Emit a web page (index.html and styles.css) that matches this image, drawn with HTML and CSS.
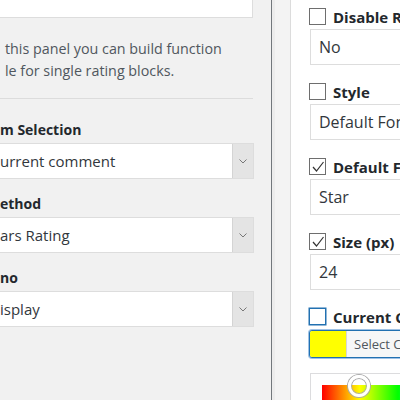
FILE: index.html
```html
<!DOCTYPE html>
<html>
<head>
<meta charset="utf-8">
<link rel="stylesheet" href="styles.css">
</head>
<body>
<div class="page">
  <div class="left">
    <div class="inner">
      <div class="top-input"></div>
      <p class="desc">this panel you can build function<br>le for single rating blocks.</p>
      <hr class="sep">
      <div class="field">
        <div class="label">m Selection</div>
        <div class="select"><span class="val">urrent comment</span><span class="arrow"><svg width="8" height="5" viewBox="0 0 8 5"><path d="M0.5 0.5 L4 4 L7.5 0.5" fill="none" stroke="#777" stroke-width="1"/></svg></span></div>
      </div>
      <div class="field">
        <div class="label">ethod</div>
        <div class="select"><span class="val">ars Rating</span><span class="arrow"><svg width="8" height="5" viewBox="0 0 8 5"><path d="M0.5 0.5 L4 4 L7.5 0.5" fill="none" stroke="#777" stroke-width="1"/></svg></span></div>
      </div>
      <div class="field">
        <div class="label">no</div>
        <div class="select"><span class="val">isplay</span><span class="arrow"><svg width="8" height="5" viewBox="0 0 8 5"><path d="M0.5 0.5 L4 4 L7.5 0.5" fill="none" stroke="#777" stroke-width="1"/></svg></span></div>
      </div>
    </div>
  </div>
  <div class="strip"></div>
  <div class="right">
    <div class="row">
      <div class="check-line"><span class="cb"></span><span class="rlabel">Disable Rating</span></div>
      <div class="input">No</div>
    </div>
    <div class="row">
      <div class="check-line"><span class="cb"></span><span class="rlabel">Style</span></div>
      <div class="input">Default Font Icons</div>
    </div>
    <div class="row">
      <div class="check-line"><span class="cb"><svg width="14" height="14" viewBox="0 0 14 14"><path d="M2 7 L5.5 11 L12.5 2" fill="none" stroke="#333" stroke-width="1.2"/></svg></span><span class="rlabel">Default Font</span></div>
      <div class="input">Star</div>
    </div>
    <div class="row">
      <div class="check-line"><span class="cb"><svg width="14" height="14" viewBox="0 0 14 14"><path d="M2 7 L5.5 11 L12.5 2" fill="none" stroke="#333" stroke-width="1.2"/></svg></span><span class="rlabel">Size (px)</span></div>
      <div class="input">24</div>
    </div>
    <div class="row">
      <div class="check-line"><span class="cb focus"></span><span class="rlabel">Current Color</span></div>
      <div class="color-btn"><span class="swatch"></span><span class="ctext">Select Color</span></div>
      <div class="picker">
        <div class="grad"></div>
        <span class="handle"></span>
      </div>
    </div>
  </div>
</div>
</body>
</html>
```
FILE: styles.css
```css
html, body {
  margin: 0;
  padding: 0;
}
body {
  width: 400px;
  height: 400px;
  overflow: hidden;
  font-family: "Open Sans", "Noto Sans", sans-serif;
}
.page {
  display: flex;
  width: 400px;
  height: 400px;
  overflow: hidden;
}
.left {
  width: 271px;
  flex: none;
  background: #f1f1f1;
  border-right: 1px solid #72777c;
}
.inner {
  width: 253px;
}
.top-input {
  height: 18px;
  box-sizing: border-box;
  background: #fff;
  border: 1px solid #dddddd;
  border-top: none;
  border-left: none;
}
.desc {
  margin: 20px 0 0 0;
  padding-left: 5px;
  font-size: 14.3px;
  line-height: 22px;
  color: #50575e;
  white-space: nowrap;
}
.sep {
  margin: 16px 0 0 0;
  border: none;
  border-top: 1px solid #dcdcdc;
  height: 0;
}
.field {
  margin-top: 21px;
}
.field + .field {
  margin-top: 15px;
}
.label {
  font-size: 14px;
  font-weight: 700;
  line-height: 20px;
  color: #23282d;
  height: 20px;
}
.select {
  margin-top: 3px;
  height: 36px;
  box-sizing: border-box;
  background: #fff;
  border: 1px solid #dddddd;
  border-left: none;
  display: flex;
  align-items: center;
  width: 254px;
}
.select .val {
  flex: 1;
  font-size: 15px;
  color: #32373c;
}
.select .arrow {
  width: 21px;
  height: 34px;
  box-sizing: border-box;
  background: #e4e4e4;
  border-left: 1px solid #d4d4d4;
  display: flex;
  align-items: center;
  justify-content: center;
}
.strip {
  width: 18px;
  flex: none;
  background: #f3f3f3;
  border-right: 1px solid #dcdcdc;
  box-shadow: inset 3px 0 0 #ececec;
}
.right {
  flex: 1;
  background: #fff;
  padding-left: 18px;
  padding-top: 8px;
  white-space: nowrap;
  overflow: hidden;
}
.row {
  margin-bottom: 18px;
}
.check-line {
  display: flex;
  align-items: center;
  height: 17px;
}
.cb {
  width: 17px;
  height: 17px;
  box-sizing: border-box;
  border: 1px solid #6e6e6e;
  background: #fff;
  flex: none;
  display: flex;
  align-items: center;
  justify-content: center;
}
.cb.focus {
  border-color: #2271b1;
  box-shadow: 0 0 0 0.5px #2271b1;
}
.rlabel {
  margin-left: 7px;
  font-size: 15px;
  font-weight: 700;
  color: #23282d;
}
.input {
  margin-top: 4px;
  margin-left: 1px;
  height: 36px;
  box-sizing: border-box;
  width: 200px;
  border: 1px solid #dddddd;
  border-right: none;
  padding-left: 8px;
  font-size: 16px;
  line-height: 34px;
  color: #32373c;
}
.color-btn {
  margin-top: 5px;
  height: 28px;
  width: 200px;
  box-sizing: border-box;
  border: 1px solid #2271b1;
  border-radius: 3px;
  box-shadow: 0 0 0 1px #9ec2e6;
  background: #f6f7f7;
  display: flex;
  align-items: center;
  overflow: hidden;
}
.swatch {
  width: 36px;
  height: 26px;
  background: #ffff00;
  border-right: 1px solid #d6d6d6;
  flex: none;
}
.ctext {
  margin-left: 7px;
  font-size: 13px;
  color: #50575e;
}
.picker {
  position: relative;
  margin-top: 15px;
  margin-left: 1px;
  height: 60px;
  width: 200px;
  border: 1px solid #dcdcde;
  box-sizing: border-box;
  background: #fff;
}
.grad {
  margin: 11px 0 0 11px;
  height: 40px;
  background: linear-gradient(to right, #ff0000 0, #ffff00 38px, #00ff00 76px, #00ffff 114px, #0000ff 152px);
}
.handle {
  position: absolute;
  left: 37px;
  top: 1px;
  width: 22px;
  height: 22px;
  border-radius: 50%;
  border: 3px solid #fff;
  box-shadow: 0 0 0 1px #aaa, inset 0 0 0 1px #aaa;
  box-sizing: border-box;
}
```
